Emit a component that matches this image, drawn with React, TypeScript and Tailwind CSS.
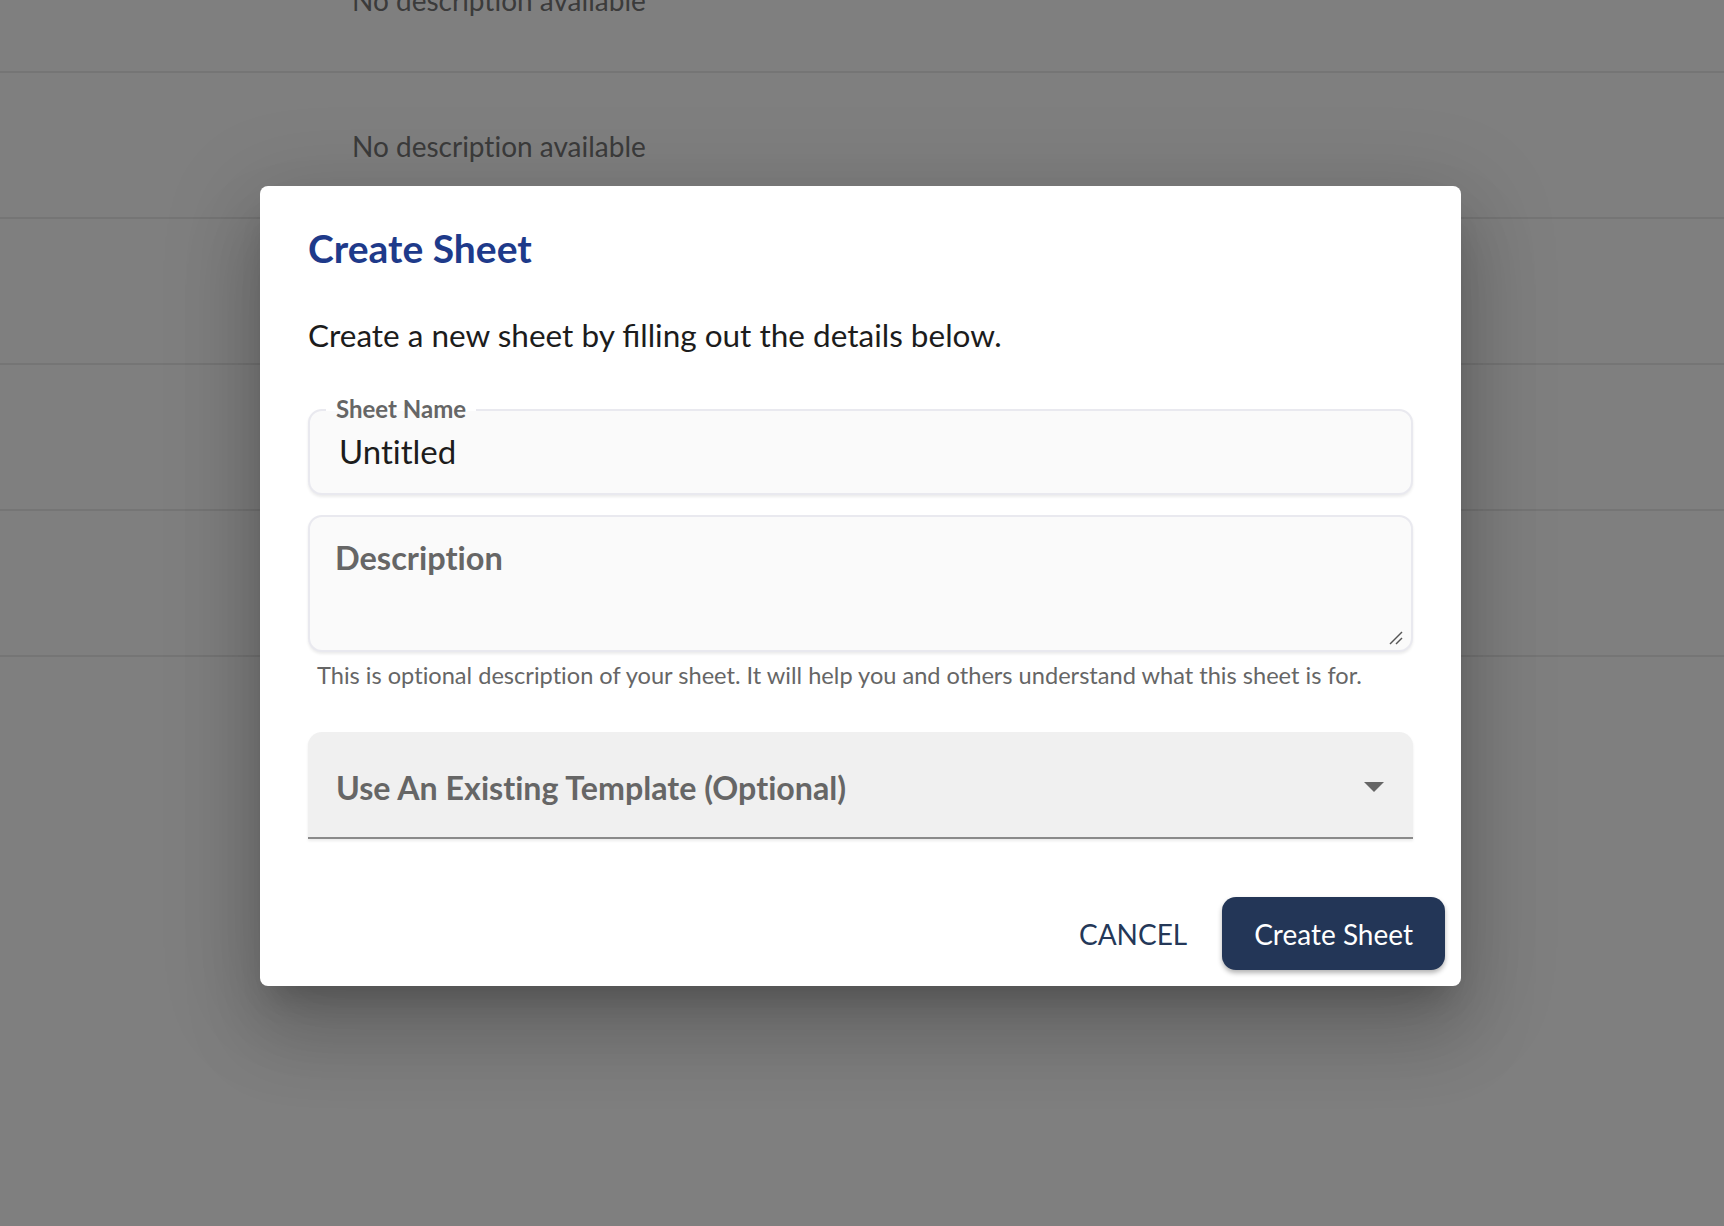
import React from "react";

const rows = [0, 1, 2, 3, 4];

export default function App() {
  return (
    <div
      className="relative w-[1724px] h-[1226px] overflow-hidden bg-white [font-variant-ligatures:no-common-ligatures]"
      style={{ fontFamily: "Lato, 'Noto Sans', sans-serif" }}
    >
      {/* background list */}
      <div className="-mt-[73px] flex flex-col">
        {rows.map((r) => (
          <div
            key={r}
            className="h-[146px] border-b-2 border-[#ebebeb] flex items-center pl-[352px] pt-[1px]"
          >
            <span className="text-[28px] leading-[34px] text-[#767676]">
              No description available
            </span>
          </div>
        ))}
      </div>

      {/* overlay */}
      <div className="absolute inset-0 bg-black/50" />

      {/* dialog */}
      <div className="absolute inset-0 flex justify-center pt-[186px] pr-[3px]">
        <div className="w-[1201px] h-[800px] bg-white rounded-[8px] shadow-[0_22px_30px_-14px_rgba(0,0,0,0.2),0_48px_76px_6px_rgba(0,0,0,0.14),0_18px_92px_16px_rgba(0,0,0,0.12)] flex flex-col">
          <div className="px-[48px] pt-[41px]">
            <h2 className="text-[39px] leading-[43px] font-bold text-[#1e3a8a]">
              Create Sheet
            </h2>
            <p className="mt-[47px] text-[31.5px] leading-[36px] text-[#1c1c1c]">
              Create a new sheet by{" "}
              <span className="[font-variant-ligatures:common-ligatures]">filling</span>{" "}
              out the details below.
            </p>

            {/* Sheet name */}
            <div className="relative mt-[56px] h-[86px] rounded-[14px] border-2 border-[#e9e9ef] bg-[#fafafa] shadow-[0_2px_3px_rgba(0,0,0,0.08)]">
              <span className="absolute -top-[17px] left-[16px] px-[10px] text-[24px] leading-[29px] font-bold text-[#666666] bg-[linear-gradient(to_bottom,#ffffff_58%,#fafafa_58%)]">
                Sheet Name
              </span>
              <div className="pl-[29px] pt-[21px] text-[33px] leading-[39px] text-[#1c1c1c]">
                Untitled
              </div>
            </div>

            {/* Description */}
            <div className="relative mt-[20px] h-[137px] rounded-[14px] border-2 border-[#e9e9ef] bg-[#fafafa] shadow-[0_2px_3px_rgba(0,0,0,0.08)]">
              <div className="pl-[25px] pt-[22px] text-[32.5px] leading-[38px] font-bold text-[#666666]">
                Description
              </div>
              <svg
                className="absolute right-[8px] bottom-[5px]"
                width="14"
                height="14"
                viewBox="0 0 14 14"
              >
                <line x1="1" y1="13" x2="13" y2="1" stroke="#555" strokeWidth="1.4" />
                <line x1="7" y1="13" x2="13" y2="7" stroke="#555" strokeWidth="1.4" />
              </svg>
            </div>
            <p className="mt-[9px] ml-[9px] text-[23.6px] leading-[28px] text-[#666666]">
              This is optional description of your sheet. It will help you and others understand what this sheet is for.
            </p>

            {/* Template select */}
            <div className="relative mt-[43px] h-[107px] rounded-t-[14px] bg-[#f0f0f0] border-b-2 border-[#8a8a8a] shadow-[0_2px_3px_rgba(0,0,0,0.08)]">
              <div className="pl-[28px] pt-[37px] text-[32.2px] leading-[38px] font-bold text-[#666666]">
                Use An Existing Template (Optional)
              </div>
              <svg
                className="absolute right-[15px] top-[30px]"
                width="48"
                height="48"
                viewBox="0 0 24 24"
              >
                <path d="M7 10l5 5 5-5z" fill="#666666" />
              </svg>
            </div>
          </div>

          {/* actions */}
          <div className="mt-[58px] flex items-center justify-end pr-[16px]">
            <button className="mr-[35px] text-[28px] leading-[34px] text-[#243858]">
              CANCEL
            </button>
            <button className="h-[73px] px-[32px] rounded-[14px] bg-[#233657] text-white text-[28px] leading-[34px] shadow-[0_3px_5px_rgba(0,0,0,0.3)]">
              Create Sheet
            </button>
          </div>
        </div>
      </div>
    </div>
  );
}
